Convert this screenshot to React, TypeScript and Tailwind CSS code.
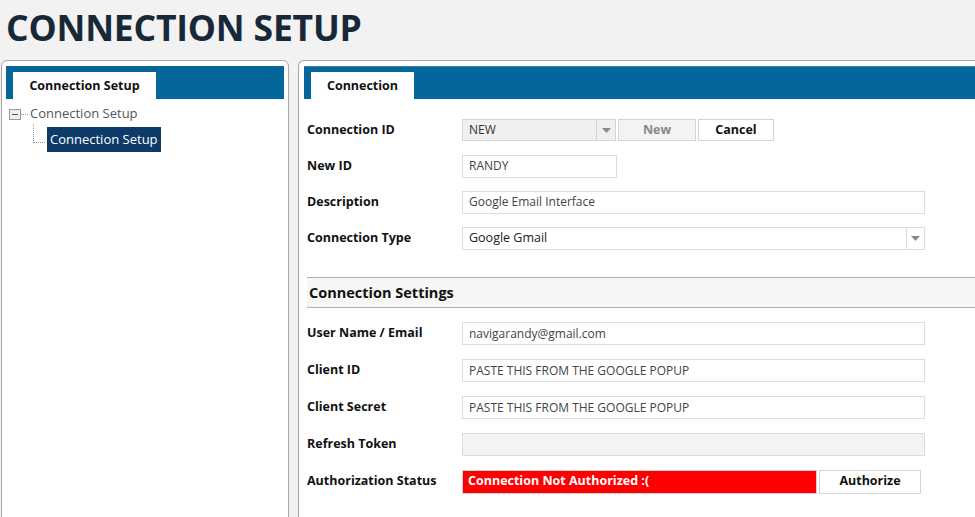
const font = { fontFamily: '"Open Sans", "Noto Sans", sans-serif' };

const Field = ({ label, tall = false, children }: { label: string; tall?: boolean; children: React.ReactNode }) => (
  <div className={`flex items-center ${tall ? 'h-[37px]' : 'h-[36px]'}`}>
    <div className="w-[155px] text-[12.5px] font-bold text-[#111]">{label}</div>
    {children}
  </div>
);

const TextBox = ({ value, wide = true, disabled = false }: { value: string; wide?: boolean; disabled?: boolean }) => (
  <div
    className={`flex h-[23px] items-center border border-[#dcdcdc] px-[6px] text-[12px] text-[#444] ${
      wide ? 'w-[463px]' : 'w-[155px]'
    } ${disabled ? 'bg-[#f3f3f3]' : 'bg-white'}`}
  >
    {value}
  </div>
);

const Caret = () => (
  <svg width="9" height="5" viewBox="0 0 9 5">
    <path d="M0 0h9L4.5 5z" fill="#8a8a8a" />
  </svg>
);

export default function App() {
  return (
    <div className="h-[517px] w-[975px] overflow-hidden bg-[#f2f2f2]" style={font}>
      <h1 className="h-[60px] pl-[6px] pt-[4px] text-[35.5px] font-bold leading-[46px] tracking-[-0.2px] text-[#182838]">
        CONNECTION SETUP
      </h1>

      <div className="flex gap-[9px] pl-[1px]">
        {/* left panel */}
        <div className="h-[470px] w-[288px] rounded-t-[6px] border border-[#a8a8a8] bg-white px-[4px] pt-[5px]">
          <div className="flex h-[33px] items-end bg-[#04669b] pl-[7px]">
            <div className="flex h-[27px] w-[143px] items-center justify-center pt-[2px] bg-white text-[12.5px] font-bold text-[#111]">
              Connection Setup
            </div>
          </div>
          <div className="pl-[3px] pt-[4px] text-[13px]">
            <div className="flex h-[22px] items-center">
              <span className="flex h-[11px] w-[12px] items-center justify-center border border-[#9a9a9a] bg-[#eee]">
                <span className="h-[1px] w-[6px] bg-[#555]" />
              </span>
              <span className="w-[7px] border-t border-dotted border-[#999]" />
              <span className="ml-[2px] text-[#555]">Connection Setup</span>
            </div>
            <div className="mt-[2px] flex items-start pl-[24px]">
              <span className="mt-[-3px] h-[19px] w-[12px] border-b border-l border-dotted border-[#999]" />
              <span className="ml-[2px] flex h-[25px] items-center bg-[#0c3b6a] px-[3px] text-white">
                Connection Setup
              </span>
            </div>
          </div>
        </div>

        {/* right panel */}
        <div className="h-[470px] flex-1 rounded-tl-[6px] border-l border-t border-[#a8a8a8] bg-white pl-[5px] pt-[5px]">
          <div className="flex h-[33px] items-end border-t border-[#3a86b4] bg-[#04669b] pl-[7px]">
            <div className="flex h-[27px] w-[103px] items-center justify-center pt-[2px] bg-white text-[12.5px] font-bold text-[#111]">
              Connection
            </div>
          </div>

          <div className="pl-[3px] pt-[13px]">
            <Field label="Connection ID">
              <div className="flex h-[22px] w-[154px] items-center border border-[#d4d4d4] bg-[#f0f0f0] text-[12px] text-[#333]">
                <span className="flex-1 pl-[6px]">NEW</span>
                <span className="flex h-full w-[19px] items-center justify-center border-l border-[#d4d4d4]">
                  <Caret />
                </span>
              </div>
              <button className="ml-[2px] h-[22px] w-[78px] border border-[#d4d4d4] bg-[#f3f3f3] text-[12.5px] font-bold text-[#888]">
                New
              </button>
              <button className="ml-[2px] h-[22px] w-[76px] border border-[#d4d4d4] bg-white text-[12.5px] font-bold text-[#111]">
                Cancel
              </button>
            </Field>
            <Field label="New ID">
              <TextBox value="RANDY" wide={false} />
            </Field>
            <Field label="Description">
              <TextBox value="Google Email Interface" />
            </Field>
            <Field label="Connection Type">
              <div className="flex h-[23px] w-[463px] items-center border border-[#dcdcdc] bg-white text-[12.5px] text-[#222]">
                <span className="flex-1 pl-[6px]">Google Gmail</span>
                <span className="flex h-full w-[18px] items-center justify-center border-l border-[#dcdcdc]">
                  <Caret />
                </span>
              </div>
            </Field>
          </div>

          <div className="ml-[3px] mt-[21px] flex h-[31px] items-center border-y border-[#b0b0b0] bg-[#f6f6f6] pl-[2px] text-[14.5px] font-bold text-[#111]">
            Connection Settings
          </div>

          <div className="pl-[3px] pt-[7px]">
            <Field tall label="User Name / Email">
              <TextBox value="navigarandy@gmail.com" />
            </Field>
            <Field tall label="Client ID">
              <TextBox value="PASTE THIS FROM THE GOOGLE POPUP" />
            </Field>
            <Field tall label="Client Secret">
              <TextBox value="PASTE THIS FROM THE GOOGLE POPUP" />
            </Field>
            <Field tall label="Refresh Token">
              <TextBox value="" disabled />
            </Field>
            <Field tall label="Authorization Status">
              <div className="flex h-[24px] w-[355px] items-center border border-[#d0d0d0] bg-[#ff0000] pl-[5px] text-[12.5px] font-bold text-white">
                Connection Not Authorized :(
              </div>
              <button className="ml-[2px] h-[24px] w-[102px] border border-[#d4d4d4] bg-white text-[12.5px] font-bold text-[#111]">
                Authorize
              </button>
            </Field>
          </div>
        </div>
      </div>
    </div>
  );
}
